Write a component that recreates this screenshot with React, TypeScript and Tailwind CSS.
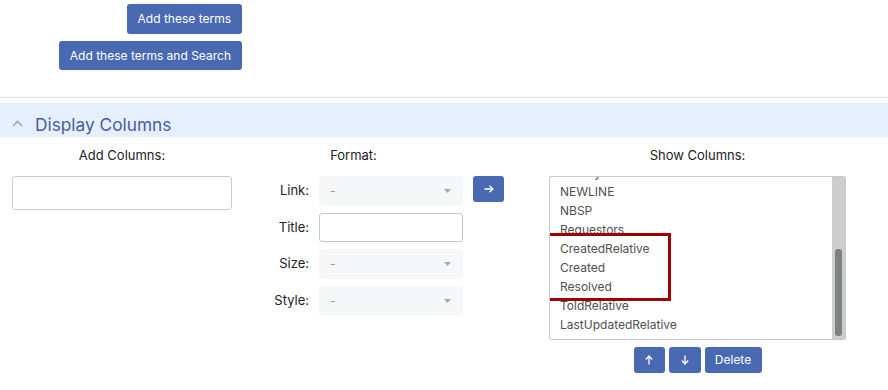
import React from "react";

const blueBtn = "bg-[#4a69b3] text-white text-[12px] rounded-[3px] flex items-center justify-center";

const columnas = [
  "Priority",
  "NEWLINE",
  "NBSP",
  "Requestors",
  "CreatedRelative",
  "Created",
  "Resolved",
  "ToldRelative",
  "LastUpdatedRelative",
];

const SelectFalso = () => (
  <div className="w-[144px] h-[30px] bg-[#f6f7f9] rounded-[4px] flex items-center justify-between pl-[11px] pr-[12px]">
    <span className="text-[#9a9a9a] text-[12px]">-</span>
    <svg width="7" height="4" viewBox="0 0 7 4">
      <path d="M0 0 L7 0 L3.5 4 Z" fill="#a9a9a9" />
    </svg>
  </div>
);

const Fila = ({ label, children }: { label: string; children: React.ReactNode }) => (
  <div className="flex items-center">
    <span className="w-[65px] text-right text-[13px] text-[#222]">{label}</span>
    <div className="ml-[10px]">{children}</div>
  </div>
);

export default function App() {
  return (
    <div className="w-[888px] h-[390px] bg-white overflow-hidden font-['Inter','Liberation_Sans',sans-serif] text-[13px]">
      {/* botones de arriba */}
      <div className="w-[242px] flex flex-col items-end gap-[7px] pt-[4px]">
        <button className={`${blueBtn} h-[30px] px-[11px]`}>Add these terms</button>
        <button className={`${blueBtn} h-[29px] px-[11px]`}>Add these terms and Search</button>
      </div>

      <div className="mt-[27px] border-t border-[#e4e4e4]" />

      {/* cabecera de la seccion */}
      <div className="mt-[5px] h-[34px] bg-[#e6f0fd] flex items-center pl-[12px] pt-[9px]">
        <svg width="11" height="7" viewBox="0 0 11 7" className="mb-[3px]">
          <path d="M1 6 L5.5 1.5 L10 6" stroke="#a8a8a8" strokeWidth="1.7" fill="none" />
        </svg>
        <span className="ml-[12px] text-[17.3px] text-[#4a5aa6] leading-none">Display Columns</span>
      </div>

      <div className="flex pt-[9px]">
        {/* Add Columns */}
        <div className="w-[244px] flex flex-col">
          <span className="text-center text-[#222] leading-[18px]">Add Columns:</span>
          <input className="mt-[12px] ml-[12px] w-[220px] h-[34px] border border-[#c8cbd0] rounded-[3px]" />
        </div>

        {/* Format */}
        <div className="w-[219px] flex flex-col">
          <span className="text-center text-[#222] leading-[18px]">Format:</span>
          <div className="mt-[12px] flex flex-col gap-[7px]">
            <Fila label="Link:">
              <SelectFalso />
            </Fila>
            <Fila label="Title:">
              <input className="w-[144px] h-[29px] border border-[#c3c7ce] rounded-[3px]" />
            </Fila>
            <Fila label="Size:">
              <SelectFalso />
            </Fila>
            <Fila label="Style:">
              <SelectFalso />
            </Fila>
          </div>
        </div>

        {/* flecha */}
        <div className="w-[44px] pt-[30px] pl-[10px]">
          <button className={`${blueBtn} w-[31px] h-[26px]`}>
            <svg width="10" height="8" viewBox="0 0 10 8">
              <path d="M0.5 4 H9 M5.5 0.8 L9 4 L5.5 7.2" stroke="white" strokeWidth="1.3" fill="none" />
            </svg>
          </button>
        </div>

        {/* Show Columns */}
        <div className="flex-1 flex flex-col items-center">
          <span className="text-center text-[#222] leading-[18px]">Show Columns:</span>
          <div className="relative mt-[12px] w-[297px] h-[164px] border border-[#c5c9d0] rounded-[2px] flex overflow-hidden">
            <div className="flex-1 overflow-hidden">
              <div className="-mt-[14px] pl-[10px] flex flex-col">
                {columnas.map((c) => (
                  <span key={c} className="leading-[19px] text-[12px] text-[#4f4f4f]">{c}</span>
                ))}
              </div>
            </div>
            <div className="w-[13px] bg-[#cdcdcd] pt-[72px] pb-[3px] flex justify-center">
              <div className="w-[7px] h-[87px] bg-[#7f8180] rounded-[3px]" />
            </div>
            <div className="absolute left-[-4px] top-[56px] w-[125px] h-[68px] border-[3px] border-[#a10000]" />
          </div>
          <div className="mt-[7px] flex gap-[4px]">
            <button className={`${blueBtn} w-[31px] h-[26px]`}>
              <svg width="8" height="10" viewBox="0 0 8 10">
                <path d="M4 9.5 V1 M0.8 4.5 L4 1 L7.2 4.5" stroke="white" strokeWidth="1.3" fill="none" />
              </svg>
            </button>
            <button className={`${blueBtn} w-[32px] h-[26px]`}>
              <svg width="8" height="10" viewBox="0 0 8 10">
                <path d="M4 0.5 V9 M0.8 5.5 L4 9 L7.2 5.5" stroke="white" strokeWidth="1.3" fill="none" />
              </svg>
            </button>
            <button className={`${blueBtn} w-[57px] h-[26px]`}>Delete</button>
          </div>
        </div>
      </div>
    </div>
  );
}
